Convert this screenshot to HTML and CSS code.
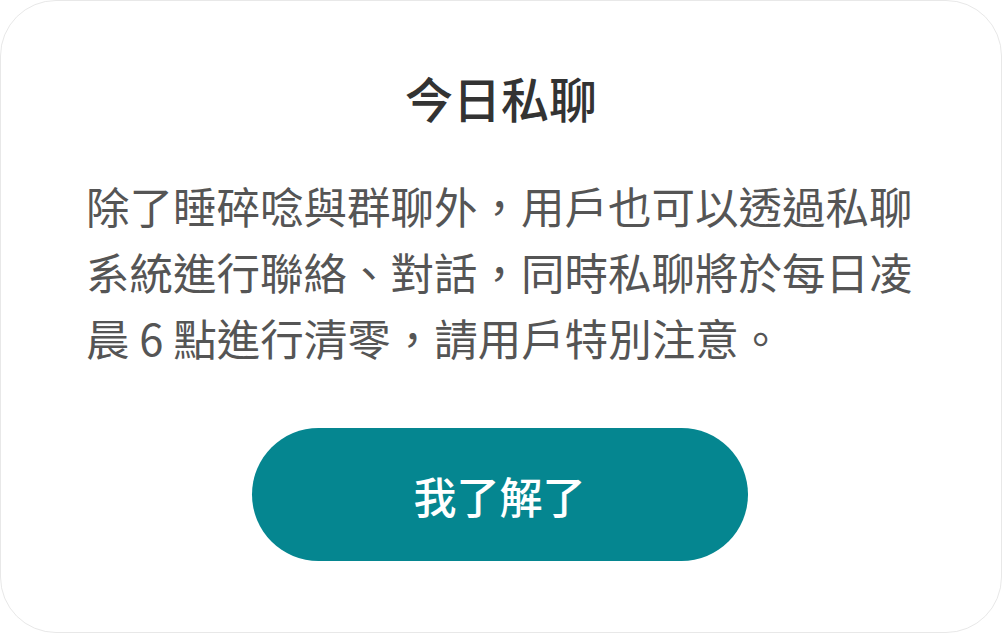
FILE: index.html
```html
<!DOCTYPE html>
<html lang="zh-Hant">
<head>
<meta charset="utf-8">
<title>今日私聊</title>
<link rel="stylesheet" href="styles.css">
</head>
<body>
<div class="card">
  <h1 class="title">今日私聊</h1>
  <p class="message">除了睡碎唸與群聊外，用戶也可以透過私聊系統進行聯絡、對話，同時私聊將於每日凌晨 6 點進行清零，請用戶特別注意。</p>
  <button class="confirm" type="button">我了解了</button>
</div>
</body>
</html>
```

FILE: styles.css
```css
html, body {
  margin: 0;
  padding: 0;
  background: #ffffff;
}
body {
  width: 1002px;
  height: 633px;
  font-family: "Noto Sans CJK TC", "Noto Sans CJK SC", "Noto Sans", sans-serif;
}
.card {
  box-sizing: border-box;
  width: 1002px;
  height: 633px;
  border: 1px solid #e8e8e8;
  border-radius: 56px;
  background: #ffffff;
  display: flex;
  flex-direction: column;
  align-items: center;
  padding: 60px 86px 0 86px;
}
.title {
  margin: 0;
  font-size: 48px;
  line-height: 72px;
  font-weight: 500;
  color: #333333;
  text-align: center;
}
.message {
  margin: 40px 0 0 0;
  width: 830px;
  font-size: 43.5px;
  line-height: 66px;
  color: #555555;
  text-align: left;
}
.confirm {
  margin: 57px 3px 0 0;
  width: 496px;
  height: 133px;
  border: none;
  border-radius: 67px;
  background: #058690;
  color: #ffffff;
  font-family: inherit;
  font-size: 43px;
  font-weight: 500;
  cursor: pointer;
}
```
